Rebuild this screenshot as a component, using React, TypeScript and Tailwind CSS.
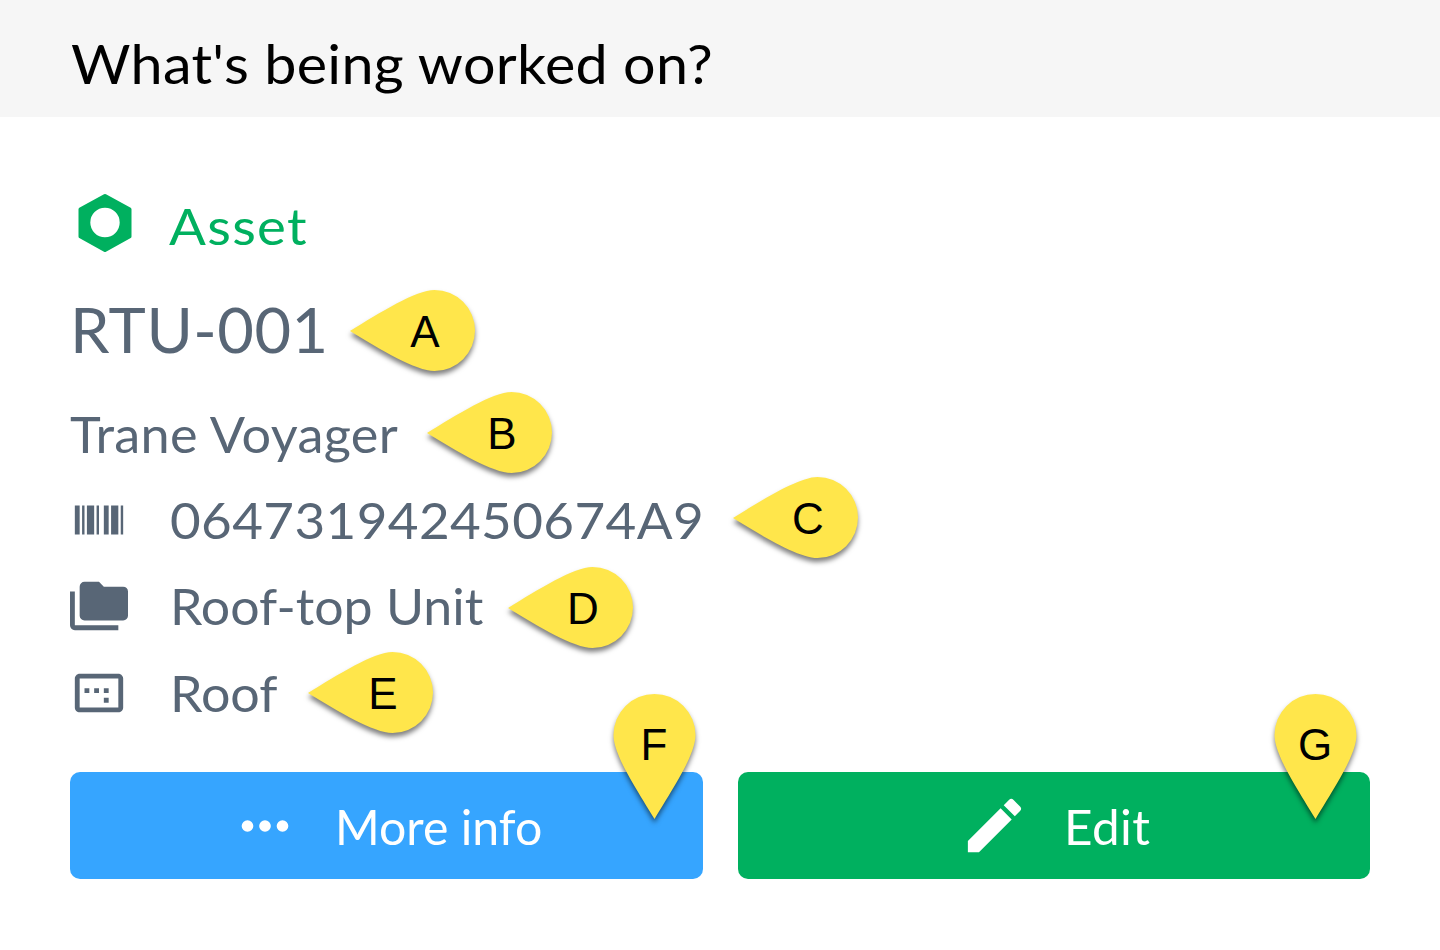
import type { ReactNode } from "react";

function Icon({ d, className }: { d: string; className: string }) {
  return (
    <svg viewBox="0 0 24 24" fill="currentColor" className={className}>
      <path d={d} />
    </svg>
  );
}

const BARCODE =
  "M2,6H4V18H2V6M5,6H6V18H5V6M7,6H10V18H7V6M11,6H12V18H11V6M14,6H16V18H14V6M17,6H20V18H17V6M21,6H22V18H21V6Z";
const FOLDERS =
  "M22,4H14L12,2H6A2,2 0 0,0 4,4V16A2,2 0 0,0 6,18H22A2,2 0 0,0 24,16V6A2,2 0 0,0 22,4M2,6H0V20A2,2 0 0,0 2,22H20V20H2V6Z";
const LOCATION =
  "M16 10h-2v2h2v-2zm0 4h-2v2h2v-2zm-8-4H6v2h2v-2zm4 0h-2v2h2v-2zm8-6H4c-1.1 0-2 .9-2 2v12c0 1.1.9 2 2 2h16c1.1 0 2-.9 2-2V6c0-1.1-.9-2-2-2zm0 14H4V6h16v12z";
const PENCIL =
  "M20.71,7.04C21.1,6.65 21.1,6 20.71,5.63L18.37,3.29C18,2.9 17.35,2.9 16.96,3.29L15.12,5.12L18.87,8.87M3,17.25V21H6.75L17.81,9.93L14.06,6.18L3,17.25Z";
const DOTS =
  "M16,12A2,2 0 0,1 18,10A2,2 0 0,1 20,12A2,2 0 0,1 18,14A2,2 0 0,1 16,12M10,12A2,2 0 0,1 12,10A2,2 0 0,1 14,12A2,2 0 0,1 12,14A2,2 0 0,1 10,12M4,12A2,2 0 0,1 6,10A2,2 0 0,1 8,12A2,2 0 0,1 6,14A2,2 0 0,1 4,12Z";

function Detail({ icon, className, textClass, children }: { icon: string; className: string; textClass: string; children: ReactNode }) {
  return (
    <div className={`flex items-center ${className}`}>
      <Icon d={icon} className="mr-[42px] size-[58px] shrink-0" />
      <span className={`origin-left ${textClass}`}>{children}</span>
    </div>
  );
}

const pinText = "absolute font-['Liberation_Sans',sans-serif] text-[44px] leading-[50px] text-black text-center";
const pinShadow = "block overflow-visible drop-shadow-[0_4px_2.5px_rgba(0,0,0,0.5)]";

function SidePin({ label, className }: { label: string; className: string }) {
  return (
    <div className={`absolute h-[81px] w-[126px] ${className}`}>
      <svg viewBox="0 0 126 81" className={pinShadow}>
        <path d="M0 41C30 22.500 66 0 84.500 0A40.500 40.500 0 0 1 84.500 81C66 81 30 59.500 0 41Z" fill="#ffe64b" />
      </svg>
      <span className={`${pinText} left-[50px] top-[17px] w-[50px]`}>{label}</span>
    </div>
  );
}

function DownPin({ label, className }: { label: string; className: string }) {
  return (
    <div className={`absolute h-[125px] w-[83px] ${className}`}>
      <svg viewBox="0 0 83 125" className={pinShadow}>
        <path d="M41.500 125C23.500 95 0.500 61 0.500 41A41 41 0 0 1 82.500 41C82.500 61 59.500 95 41.500 125Z" fill="#ffe64b" />
      </svg>
      <span className={`${pinText} left-[16px] top-[26px] w-[50px]`}>{label}</span>
    </div>
  );
}

export default function App() {
  return (
    <div className="relative h-[950px] w-[1440px] overflow-hidden bg-white font-['Lato',sans-serif] text-[50px] leading-none text-[#586676]">
      <header className="flex h-[117px] items-center bg-[#f6f6f6] pl-[71px] pt-[9px]">
        <h1 className="origin-left scale-x-[1.045] whitespace-nowrap text-[55px] tracking-[0.300px] text-black">
          What's being worked on?
        </h1>
      </header>

      <main className="flex flex-col whitespace-nowrap px-[70px] pt-16">
        <div className="flex h-[86px] items-center text-[#00b05f]">
          <svg viewBox="0 0 70 70" className="mb-[2px] mr-[29px] size-[70px]" fill="currentColor">
            <path
              fillRule="evenodd"
              d="M34 6.300Q35 5.700 36 6.300L60.700 19.800Q61.500 20.300 61.500 21.300V48.500Q61.500 49.500 60.700 50L36 63.700Q35 64.300 34 63.700L9.300 50Q8.500 49.500 8.500 48.500V21.300Q8.500 20.300 9.300 19.800ZM35 19.800A14.700 14.700 0 1 0 35 49.200A14.700 14.700 0 1 0 35 19.800Z"
            />
          </svg>
          <span className="origin-left scale-x-[1.07] pt-[2px] text-[51px] tracking-[1.200px]">Asset</span>
        </div>
        <h2 className="flex h-[123px] origin-left scale-x-[1.035] items-center pt-[2px] text-[61px] tracking-[0.500px]">
          RTU-001
        </h2>
        <div className="flex h-[87px] origin-left scale-x-[1.045] items-center tracking-[0.300px]">
          <span>Trane Voyager</span>
        </div>
        <Detail icon={BARCODE} className="h-[86px]" textClass="scale-x-[1.06] tracking-[0.350px]">
          064731942450674A9
        </Detail>
        <Detail icon={FOLDERS} className="h-[87px] pb-px" textClass="scale-x-[1.037]">
          Roof-top Unit
        </Detail>
        <Detail icon={LOCATION} className="h-[86px]" textClass="scale-x-[1.04]">
          Roof
        </Detail>

        <div className="mt-9 flex gap-[35px] text-[47.500px] text-white">
          <button className="flex h-[107px] w-[633px] items-center rounded-[10px] bg-[#36a5ff] pl-[160px]">
            <Icon d={DOTS} className="mr-[35px] size-[70px]" />
            <span className="origin-left scale-x-[1.015] pt-[3px]">More info</span>
          </button>
          <button className="flex h-[107px] w-[632px] items-center rounded-[10px] bg-[#00b05f] pl-[220.500px]">
            <Icon d={PENCIL} className="mr-[34.500px] size-[71px]" />
            <span className="origin-left scale-x-[1.04] pt-[3px] tracking-[0.400px]">Edit</span>
          </button>
        </div>
      </main>

      <SidePin label="A" className="left-[350px] top-[290px]" />
      <SidePin label="B" className="left-[427px] top-[392px]" />
      <SidePin label="C" className="left-[733px] top-[477px]" />
      <SidePin label="D" className="left-[508px] top-[567px]" />
      <SidePin label="E" className="left-[308px] top-[652px]" />
      <DownPin label="F" className="left-[613px] top-[694px]" />
      <DownPin label="G" className="left-[1274px] top-[694px]" />
    </div>
  );
}
